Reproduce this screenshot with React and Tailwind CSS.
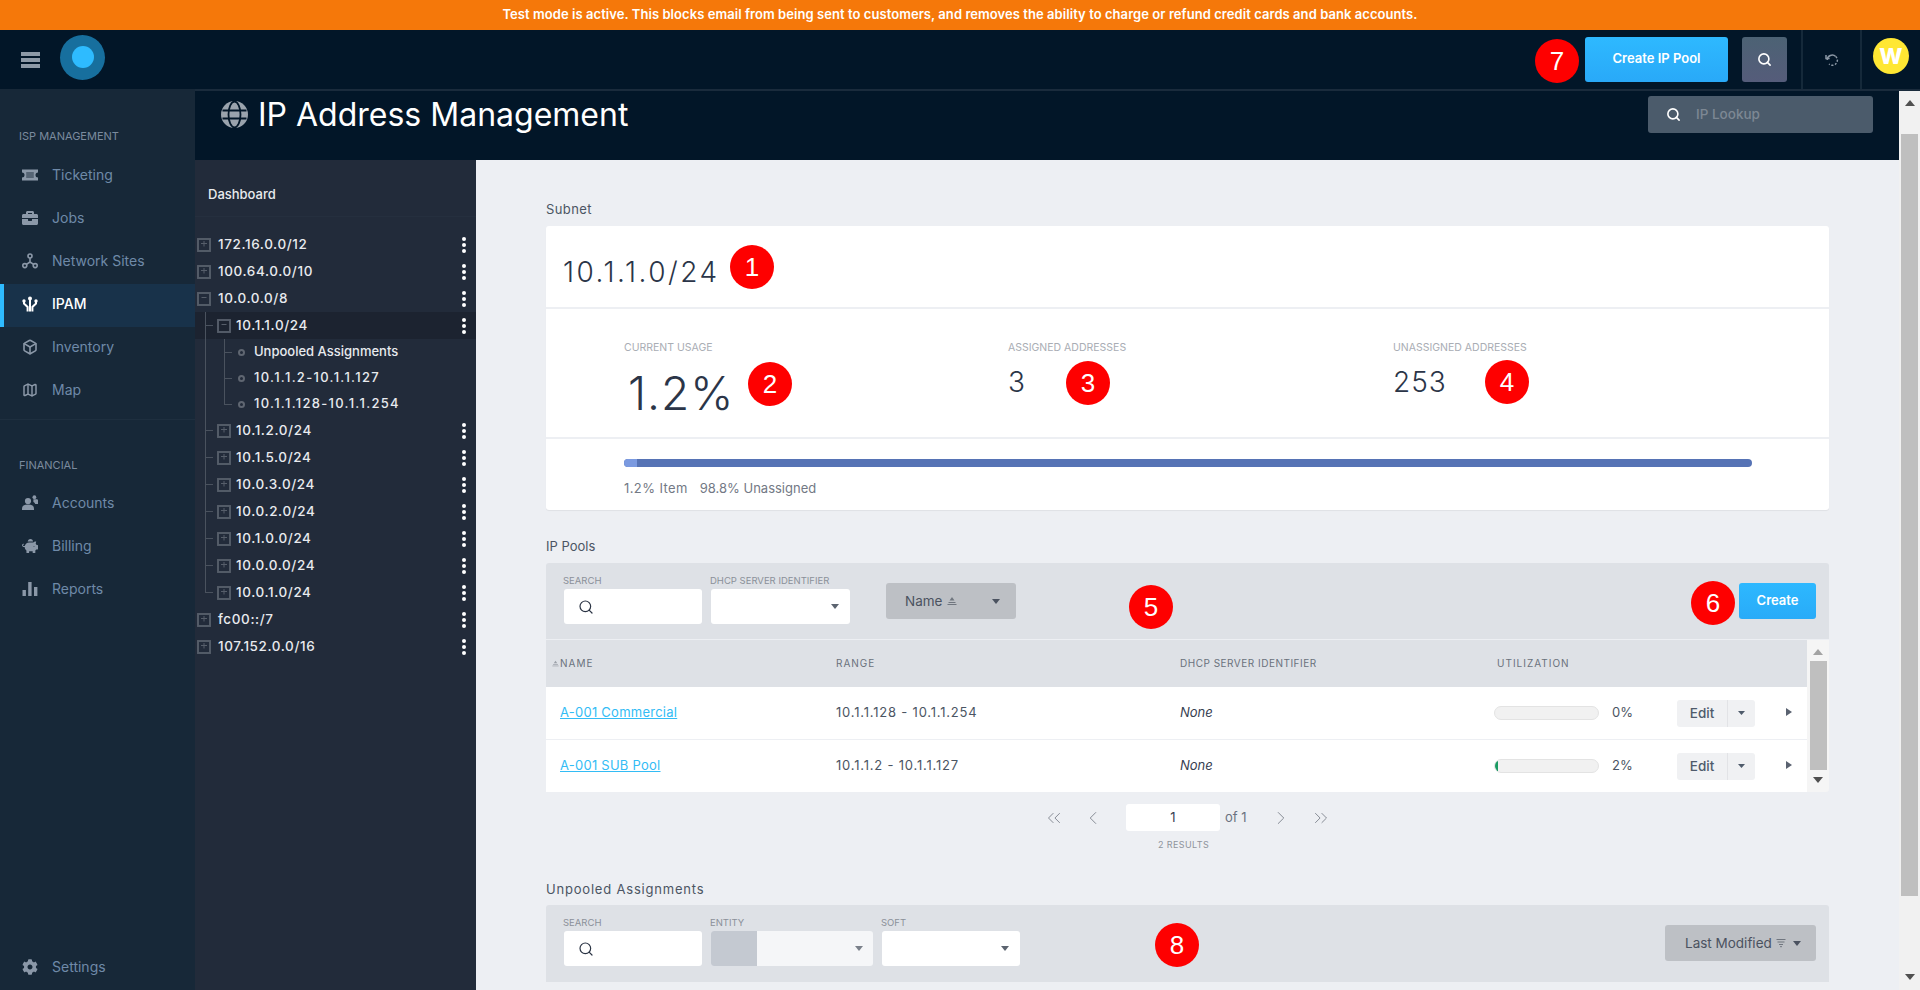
import React from 'react';
import { Search, ChevronLeft, ChevronRight, ChevronsLeft, ChevronsRight, Map as MapIcon, Box } from 'lucide-react';
import { FaBriefcase, FaPiggyBank, FaCog } from 'react-icons/fa';

const Caret = ({ className = 'w-[10px] h-[6px]', dir = 'down' }) => (
  <svg viewBox="0 0 10 6" preserveAspectRatio="none" className={`fill-current ${className}`}>
    {dir === 'down' && <polygon points="0,0 10,0 5,6" />}
    {dir === 'up' && <polygon points="0,6 10,6 5,0" />}
  </svg>
);

const Marker = ({ n, className = '' }) => (
  <div className={`w-11 h-11 rounded-full bg-[#fe0000] text-white flex items-center justify-center text-[26px] font-['Liberation_Sans',sans-serif] ${className}`}>{n}</div>
);

const TicketIcon = () => (
  <svg viewBox="0 0 16 12" className="w-4 h-3 fill-current">
    <path d="M0 0.5h16v3a2.5 2.5 0 0 0 0 5v3H0v-3a2.5 2.5 0 0 0 0-5z" />
    <rect x="4.2" y="3" width="7.6" height="6" fill="#172838" opacity="0.45" />
  </svg>
);

const NetworkIcon = () => (
  <svg viewBox="0 0 16 16" className="w-4 h-4" fill="none" stroke="currentColor" strokeWidth="1.6">
    <circle cx="8" cy="3" r="2" />
    <circle cx="2.8" cy="12.6" r="2" />
    <circle cx="13.2" cy="12.6" r="2" />
    <path d="M8 5v4M8 9l-3.6 2.4M8 9l3.6 2.4" />
  </svg>
);

const IpamIcon = () => (
  <svg viewBox="0 0 16 16" className="w-4 h-4" fill="currentColor" stroke="currentColor">
    <circle cx="8" cy="2.4" r="2" stroke="none" />
    <circle cx="2" cy="5" r="1.7" stroke="none" />
    <circle cx="14" cy="5" r="1.7" stroke="none" />
    <path d="M8 3v12.5M2 6v1.5l3.6 3.5v4.5M14 6v1.5l-3.6 3.5v4.5" fill="none" strokeWidth="2" />
  </svg>
);

const AccountsIcon = () => (
  <svg viewBox="0 0 16 15" className="w-4 h-[15px] fill-current">
    <circle cx="6" cy="6" r="3.1" />
    <path d="M0 15v-1.5c0-2.6 2-4 6-4s6 1.4 6 4V15z" />
    <circle cx="12.4" cy="2.2" r="1.9" />
    <path d="M11.4 4.2h3.4c.8 0 1.2.6 1.2 1.4V9h-2.8c-.3-1-1-1.6-1.8-2z" />
  </svg>
);

const ReportsIcon = () => (
  <svg viewBox="0 0 16 16" className="w-4 h-4 fill-current">
    <rect x="0.5" y="9" width="3.4" height="6" />
    <rect x="6.2" y="1" width="3.4" height="14" />
    <rect x="12" y="6" width="3.4" height="9" />
  </svg>
);

const GlobeIcon = () => (
  <svg viewBox="0 0 27 27" className="mt-[10px] w-[27px] h-[27px] shrink-0">
    <circle cx="13.5" cy="13.5" r="13.5" fill="#9aa3ad" />
    <ellipse cx="13.5" cy="13.5" rx="6" ry="13" fill="none" stroke="#021628" strokeWidth="1.8" />
    <path d="M1.5 9.5h24M1.5 17.5h24" stroke="#021628" strokeWidth="1.8" />
  </svg>
);

const SortAsc = ({ className = 'w-[10px] h-[10px]' }) => (
  <svg viewBox="0 0 10 10" className={className} fill="currentColor">
    <polygon points="5,1 7.5,4.5 2.5,4.5" />
    <rect x="1.5" y="6" width="7" height="1" />
    <rect x="0.5" y="8" width="9" height="1" />
  </svg>
);

const SortDesc = () => (
  <svg viewBox="0 0 10 10" className="w-[10px] h-[10px]" fill="currentColor">
    <rect x="0.5" y="1" width="9" height="1" />
    <rect x="1.5" y="3.5" width="7" height="1" />
    <rect x="3" y="6" width="4" height="1" />
    <rect x="4.2" y="8" width="1.6" height="1.2" />
  </svg>
);

const TreeBox = ({ open }) => (
  <svg viewBox="0 0 14 14" className="w-[14px] h-[14px] shrink-0" fill="none" stroke="#565e6a">
    <rect x="1" y="1" width="12" height="12" strokeWidth="1.9" />
    <path d={open ? 'M4.5 5.5h5' : 'M4 5.5h6M7 3v5.5'} strokeWidth="1" />
  </svg>
);

const Kebab = () => (
  <div className="absolute right-[10px] top-1/2 -translate-y-1/2 flex flex-col gap-[2px]">
    <span className="w-1 h-1 rounded-full bg-white" />
    <span className="w-1 h-1 rounded-full bg-white" />
    <span className="w-1 h-1 rounded-full bg-white" />
  </div>
);

const navTop = [
  { label: 'Ticketing', icon: <TicketIcon /> },
  { label: 'Jobs', icon: <FaBriefcase className="w-4 h-4" /> },
  { label: 'Network Sites', icon: <NetworkIcon /> },
  { label: 'IPAM', icon: <IpamIcon />, active: true },
  { label: 'Inventory', icon: <Box className="w-4 h-4" strokeWidth={2.4} /> },
  { label: 'Map', icon: <MapIcon className="w-4 h-4" strokeWidth={2.2} /> },
];

const navBottom = [
  { label: 'Accounts', icon: <AccountsIcon /> },
  { label: 'Billing', icon: <FaPiggyBank className="w-4 h-4" /> },
  { label: 'Reports', icon: <ReportsIcon /> },
];

function NavItem({ item }) {
  return (
    <div className={`relative h-[43px] flex items-center pl-[22px] pb-[4px] text-sm ${item.active ? 'bg-[#18324a] text-white font-medium' : 'text-[#6f8aa8]'}`}>
      {item.active && <span className="absolute left-0 top-0 bottom-0 w-1 bg-[#2ebbff]" />}
      <span className={`w-[30px] ${item.active ? 'text-white' : 'text-[#8b98a8]'}`}>{item.icon}</span>
      {item.label}
    </div>
  );
}

function Sidebar() {
  return (
    <aside className="w-[195px] shrink-0 bg-[#172838] flex flex-col">
      <div className="pl-[19px] pt-[40px] h-[66px] text-[11px] leading-[14px] text-[#7b8b9e]">ISP MANAGEMENT</div>
      <div>
        {navTop.map((item) => <NavItem key={item.label} item={item} />)}
      </div>
      <div className="h-[7px] border-b border-[#1e2f3f]" />
      <div className="pl-[19px] pt-[38px] h-[63px] text-[11px] leading-[14px] text-[#7b8b9e]">FINANCIAL</div>
      <div>
        {navBottom.map((item) => <NavItem key={item.label} item={item} />)}
      </div>
      <div className="mt-auto">
        <NavItem item={{ label: 'Settings', icon: <FaCog className="w-4 h-4" /> }} />
      </div>
    </aside>
  );
}

const roots1 = ['172.16.0.0/12', '100.64.0.0/10'];
const subnets = ['10.1.2.0/24', '10.1.5.0/24', '10.0.3.0/24', '10.0.2.0/24', '10.1.0.0/24', '10.0.0.0/24', '10.0.1.0/24'];
const roots2 = ['fc00::/7', '107.152.0.0/16'];
const pools = ['Unpooled Assignments', '10.1.1.2-10.1.1.127', '10.1.1.128-10.1.1.254'];

function RootRow({ label, open }) {
  return (
    <div className="relative h-[27px] flex items-center pl-[2px] gap-[7px] text-[13.5px] font-medium tracking-[0.6px] text-[#e8eaee]">
      <TreeBox open={open} />
      {label}
      <Kebab />
    </div>
  );
}

function SubnetRow({ label, open, active, last }) {
  return (
    <div className={`relative h-[27px] flex items-center pl-[22px] gap-[5px] text-[13.5px] font-medium tracking-[0.6px] text-[#e8eaee] ${active ? 'bg-[#1c2330]' : ''}`}>
      <span className={`absolute left-[10px] top-0 w-px bg-[#4a525e] ${last ? 'h-[14px]' : 'h-full'}`} />
      <span className="absolute left-[10px] top-[13px] w-[8px] h-px bg-[#4a525e]" />
      <TreeBox open={open} />
      {label}
      <Kebab />
    </div>
  );
}

function TreePanel() {
  return (
    <div className="w-[281px] shrink-0 bg-[#222b3a] text-white">
      <div className="h-[57px] pl-[13px] flex items-end pb-[12px] text-[13px] font-medium text-[#e8eaee] border-b border-[#252f3e]">Dashboard</div>
      <div className="pt-[14px]">
        {roots1.map((r) => <RootRow key={r} label={r} />)}
        <RootRow label="10.0.0.0/8" open />
        <SubnetRow label="10.1.1.0/24" open active />
        {pools.map((p, i) => (
          <div key={p} className={`relative h-[26px] flex items-center pl-[59px] text-[13px] font-medium text-[#e8eaee] ${i === 0 ? 'tracking-[0px]' : 'tracking-[1.3px]'}`}>
            <span className="absolute left-[10px] top-0 bottom-0 w-px bg-[#4a525e]" />
            <span className={`absolute left-[29px] top-0 w-px bg-[#4a525e] ${i === 2 ? 'h-[13px]' : 'h-full'}`} />
            <span className="absolute left-[29px] top-[13px] w-[8px] h-px bg-[#4a525e]" />
            <span className="absolute left-[43px] top-[10px] w-[7px] h-[7px] rounded-full border-2 border-[#5f6671]" />
            {p}
          </div>
        ))}
        {subnets.map((s, i) => <SubnetRow key={s} label={s} last={i === subnets.length - 1} />)}
        {roots2.map((r) => <RootRow key={r} label={r} />)}
      </div>
    </div>
  );
}

function Field({ label, className = '', children }) {
  return (
    <div className={className}>
      <div className="h-[14px] text-[9.5px] leading-[14px] text-[#8b9099] -ml-[1px]">{label}</div>
      <div className="mt-[1px]">{children}</div>
    </div>
  );
}

const SearchInput = () => (
  <div className="w-[138px] h-[35px] bg-white rounded-[3px] flex items-center pl-[14px] text-[#2b3444]">
    <Search className="w-4 h-4" strokeWidth={1.8} />
  </div>
);

const SelectBox = ({ className = 'w-[139px]' }) => (
  <div className={`h-[35px] bg-white rounded-[3px] flex items-center justify-end pr-[11px] text-[#5c6470] ${className}`}>
    <Caret className="w-[8px] h-[5px]" />
  </div>
);

function PoolRow({ name, range, pct, fill }) {
  return (
    <div className="grid grid-cols-[290px_344px_314px_1fr] h-[52px] items-center bg-white text-[13px] text-[#4b5563]">
      <a className="pl-[14px] tracking-[0.25px] text-[#33bcf5] underline">{name}</a>
      <div className="tracking-[0.8px]">{range}</div>
      <div className="italic text-[#374151]">None</div>
      <div className="flex items-center">
        <div className="w-[105px] h-[14px] rounded-full bg-[#f1f1f1] border border-[#e3e3e3] overflow-hidden">
          {fill && <div className="w-[3px] h-full bg-[#1a9a62]" />}
        </div>
        <div className="ml-[13px] w-[36px] text-[13px]">{pct}</div>
        <div className="ml-[29px] w-[78px] h-[27px] rounded-[3px] bg-[#f0f1f3] flex items-center text-[13.5px] font-medium text-[#4f5b6b]">
          <span className="w-[51px] text-center border-r border-[#e2e3e6] leading-[27px]">Edit</span>
          <span className="flex-1 flex justify-center"><Caret className="w-[7px] h-[4px]" /></span>
        </div>
        <svg viewBox="0 0 6 8" className="ml-[31px] w-[6px] h-[8px] fill-[#5a6270] -mt-[2px]"><polygon points="0,0 6,4 0,8" /></svg>
      </div>
    </div>
  );
}

function Main() {
  return (
    <main className="relative flex-1 bg-[#edeff3] px-[70px] pt-[39px] overflow-hidden">
      <Marker n="1" className="absolute left-[254px] top-[85px]" />
      <Marker n="2" className="absolute left-[272px] top-[202px]" />
      <Marker n="3" className="absolute left-[590px] top-[201px]" />
      <Marker n="4" className="absolute left-[1009px] top-[200px]" />
      <Marker n="5" className="absolute left-[653px] top-[425px]" />
      <Marker n="6" className="absolute left-[1215px] top-[421px]" />
      <Marker n="8" className="absolute left-[679px] top-[763px]" />

      <div className="h-5 text-[13px] leading-5 tracking-[0.4px] text-[#4b5563]">Subnet</div>
      <section className="mt-[7px] h-[284px] bg-white rounded-[3px] shadow-[0_1px_1px_rgba(0,0,0,0.06)]">
        <div className="h-[81px] pl-[17px] pt-[29px] text-[28px] leading-[34px] font-light tracking-[2.5px] text-[#2b3548]">10.1.1.0/24</div>
        <div className="h-[132px] border-y-2 border-[#edeff3] pl-[78px] pt-[32px] grid grid-cols-[384px_385px_1fr]">
          <div>
            <div className="text-[10.5px] leading-[14px] text-[#a9adb4]">CURRENT USAGE</div>
            <div className="mt-[10px] ml-[4px] text-[46px] leading-[56px] font-light tracking-[1px] text-[#2b3548]">1.2%</div>
          </div>
          <div>
            <div className="text-[10.5px] leading-[14px] text-[#a9adb4]">ASSIGNED ADDRESSES</div>
            <div className="mt-[10px] text-[28px] leading-[34px] font-light text-[#2b3548]">3</div>
          </div>
          <div>
            <div className="text-[10.5px] leading-[14px] text-[#a9adb4]">UNASSIGNED ADDRESSES</div>
            <div className="mt-[10px] text-[28px] leading-[34px] font-light tracking-[1px] text-[#2b3548]">253</div>
          </div>
        </div>
        <div className="pl-[78px] pr-[77px] pt-[20px]">
          <div className="h-2 rounded-full bg-[#5673b5] overflow-hidden">
            <div className="w-[13px] h-full bg-[#7b9ae0]" />
          </div>
          <div className="mt-[11px] flex gap-[12px] text-[13px] leading-5 text-[#737985]">
            <span className="tracking-[0.4px]">1.2% Item</span>
            <span>98.8% Unassigned</span>
          </div>
        </div>
      </section>

      <div className="mt-[26px] h-5 text-[13px] leading-5 text-[#4b5563]">IP Pools</div>
      <div className="mt-[7px] h-[76px] bg-[#dee1e6] rounded-t-[3px] flex items-start pl-[18px] pr-[13px] pt-[11px]">
        <Field label="SEARCH"><SearchInput /></Field>
        <Field label="DHCP SERVER IDENTIFIER" className="ml-[9px]"><SelectBox /></Field>
        <button className="ml-[36px] mt-[9px] w-[130px] h-9 rounded-[3px] bg-[#bdc0c5] flex items-center pl-[19px] pr-[16px] text-[13.5px] text-[#4b5260]">
          Name <SortAsc className="ml-[5px] w-[10px] h-[10px] text-[#70767f]" />
          <Caret className="ml-auto w-[8px] h-[5px]" />
        </button>
        <button className="ml-auto mt-[9px] w-[77px] h-9 rounded-[3px] bg-gradient-to-b from-[#2db8ff] to-[#29abf8] text-[13px] font-semibold text-white">Create</button>
      </div>

      <div className="mt-px relative pr-[22px] bg-[#f5f5f5] rounded-b-[3px] h-[152px]">
        <div className="grid grid-cols-[290px_344px_314px_1fr] h-[47px] items-center bg-[#dee1e6] text-[10px] tracking-[1px] text-[#6a717c]">
          <div className="pl-[6px] flex items-center gap-[1px]"><SortAsc className="w-[7px] h-[7px] text-[#9ba0a8]" />NAME</div>
          <div>RANGE</div>
          <div className="tracking-[0.5px]">DHCP SERVER IDENTIFIER</div>
          <div className="pl-[3px]">UTILIZATION</div>
        </div>
        <PoolRow name="A-001 Commercial" range="10.1.1.128 - 10.1.1.254" pct="0%" />
        <div className="h-px bg-[#edeff3]" />
        <PoolRow name="A-001 SUB Pool" range="10.1.1.2 - 10.1.1.127" pct="2%" fill />
        <div className="absolute right-0 top-0 bottom-0 w-[22px] flex flex-col items-center">
          <Caret dir="up" className="mt-[9px] w-[10px] h-[6px] text-[#a3a3a3]" />
          <div className="mt-[6px] w-[17px] h-[109px] bg-[#bfbfbf]" />
          <Caret className="mt-[7px] w-[10px] h-[6px] text-[#505050]" />
        </div>
      </div>

      <div className="mt-3 flex items-center text-[#7d828c]">
        <ChevronsLeft className="ml-[497px] w-[22px] h-[22px]" strokeWidth={1} />
        <ChevronLeft className="ml-[17px] w-[22px] h-[22px]" strokeWidth={1} />
        <div className="ml-[22px] w-[94px] h-[27px] bg-white rounded-[3px] text-center text-[13px] leading-[27px] text-[#374151]">1</div>
        <span className="ml-[5px] w-[24px] text-[13px] text-[#6b7280]">of 1</span>
        <ChevronRight className="ml-[21px] w-[22px] h-[22px]" strokeWidth={1} />
        <ChevronsRight className="ml-[18px] w-[22px] h-[22px]" strokeWidth={1} />
      </div>
      <div className="mt-2 h-3 pl-[612px] text-[9px] leading-3 tracking-[0.4px] text-[#8f949c]">2 RESULTS</div>

      <div className="mt-[28px] h-5 text-[13px] leading-5 tracking-[0.8px] text-[#4b5563]">Unpooled Assignments</div>
      <div className="mt-[6px] h-[77px] bg-[#dee1e6] rounded-t-[3px] flex items-start pl-[18px] pr-[13px] pt-[11px]">
        <Field label="SEARCH"><SearchInput /></Field>
        <Field label="ENTITY" className="ml-[9px]">
          <div className="w-[162px] h-[35px] rounded-[3px] overflow-hidden bg-[#f5f6f8] flex items-center text-[#7a808a]">
            <div className="w-[46px] h-full bg-[#c4c9d1]" />
            <Caret className="ml-auto mr-[10px] w-[8px] h-[5px]" />
          </div>
        </Field>
        <Field label="SOFT" className="ml-[9px]"><SelectBox className="w-[138px]" /></Field>
        <button className="ml-auto mt-[9px] w-[151px] h-9 rounded-[3px] bg-[#bdc0c5] flex items-center pl-[20px] pr-[15px] text-[13.5px] text-[#4b5260]">
          Last Modified
          <span className="ml-[4px] text-[#70767f]"><SortDesc /></span>
          <Caret className="ml-auto w-[8px] h-[5px]" />
        </button>
      </div>
    </main>
  );
}

export default function App() {
  return (
    <div className="w-[1920px] h-[990px] overflow-hidden flex flex-col font-[Inter,sans-serif]">
      <div className="h-[30px] shrink-0 bg-[#f5780a] flex items-center justify-center text-[13px] font-semibold tracking-[0.06px] text-white">
        Test mode is active. This blocks email from being sent to customers, and removes the ability to charge or refund credit cards and bank accounts.
      </div>

      <header className="h-[59px] shrink-0 bg-[#021628] flex items-center">
        <div className="ml-[21px] w-[19px] flex flex-col gap-[2px]">
          <span className="h-1 bg-[#8d99a6]" />
          <span className="h-1 bg-[#8d99a6]" />
          <span className="h-1 bg-[#8d99a6]" />
        </div>
        <div className="ml-[20px] -mt-[5px] w-[45px] h-[45px] rounded-full bg-[#176f9e] flex items-center justify-center">
          <div className="w-[22px] h-[22px] rounded-full bg-[#2ebbff]" />
        </div>
        <Marker n="7" className="ml-auto mt-[3px]" />
        <button className="ml-[6px] mt-[-1px] w-[143px] h-[45px] rounded-[3px] bg-gradient-to-b from-[#2eb9ff] to-[#29a9f8] text-[13px] font-semibold text-white">Create IP Pool</button>
        <button className="ml-[14px] mt-[-1px] w-[45px] h-[45px] rounded-[3px] bg-gradient-to-b from-[#4c6274] to-[#555c7a] flex items-center justify-center text-white">
          <Search className="w-[15px] h-[15px]" strokeWidth={2.6} />
        </button>
        <div className="ml-[14px] w-[61px] h-full border-x-2 border-[#15293a] flex items-center justify-center">
          <svg viewBox="0 0 14 14" className="w-[14px] h-[14px] text-[#8b97a5]" fill="none" stroke="currentColor" strokeWidth="1.5">
            <path d="M2.2 7a5 5 0 0 1 8.5-3.5" />
            <path d="M10.7 3.5A5 5 0 0 1 4 11" strokeDasharray="2 1.6" />
            <path d="M1 2v3.6h3.6" />
          </svg>
        </div>
        <div className="ml-[11px] mr-[11px] -mt-[7px] w-9 h-9 rounded-full bg-[#ffe733] flex items-center justify-center text-[22px] font-extrabold text-white">W</div>
      </header>

      <div className="flex-1 flex min-h-0">
        <Sidebar />
        <div className="flex-1 flex flex-col min-w-0 border-t-2 border-[#1a2b3c]">
          <div className="flex-1 flex min-h-0">
            <div className="flex-1 flex flex-col min-w-0">
              <div className="h-[69px] shrink-0 bg-[#021628] flex items-start pl-[26px] pr-[26px]">
                <GlobeIcon />
                <h1 className="ml-[10px] mt-[3px] text-[32px] leading-[42px] font-normal text-white">IP Address Management</h1>
                <div className="ml-auto mt-[5px] w-[225px] h-[37px] rounded-[3px] bg-[#4b5b6b] flex items-center pl-[18px] text-white">
                  <Search className="w-[15px] h-[15px]" strokeWidth={2.6} />
                  <span className="ml-[15px] text-[13.5px] font-medium text-[#7d8894]">IP Lookup</span>
                </div>
              </div>
              <div className="flex-1 flex min-h-0">
                <TreePanel />
                <Main />
              </div>
            </div>
            <div className="w-[21px] shrink-0 bg-[#f1f1f1] flex flex-col items-center">
              <Caret dir="up" className="mt-[9px] w-[10px] h-[6px] text-[#505050]" />
              <div className="mt-[28px] w-[17px] h-[762px] bg-[#bfbfbf]" />
              <Caret className="mt-[78px] w-[10px] h-[6px] text-[#505050]" />
            </div>
          </div>
        </div>
      </div>
    </div>
  );
}
